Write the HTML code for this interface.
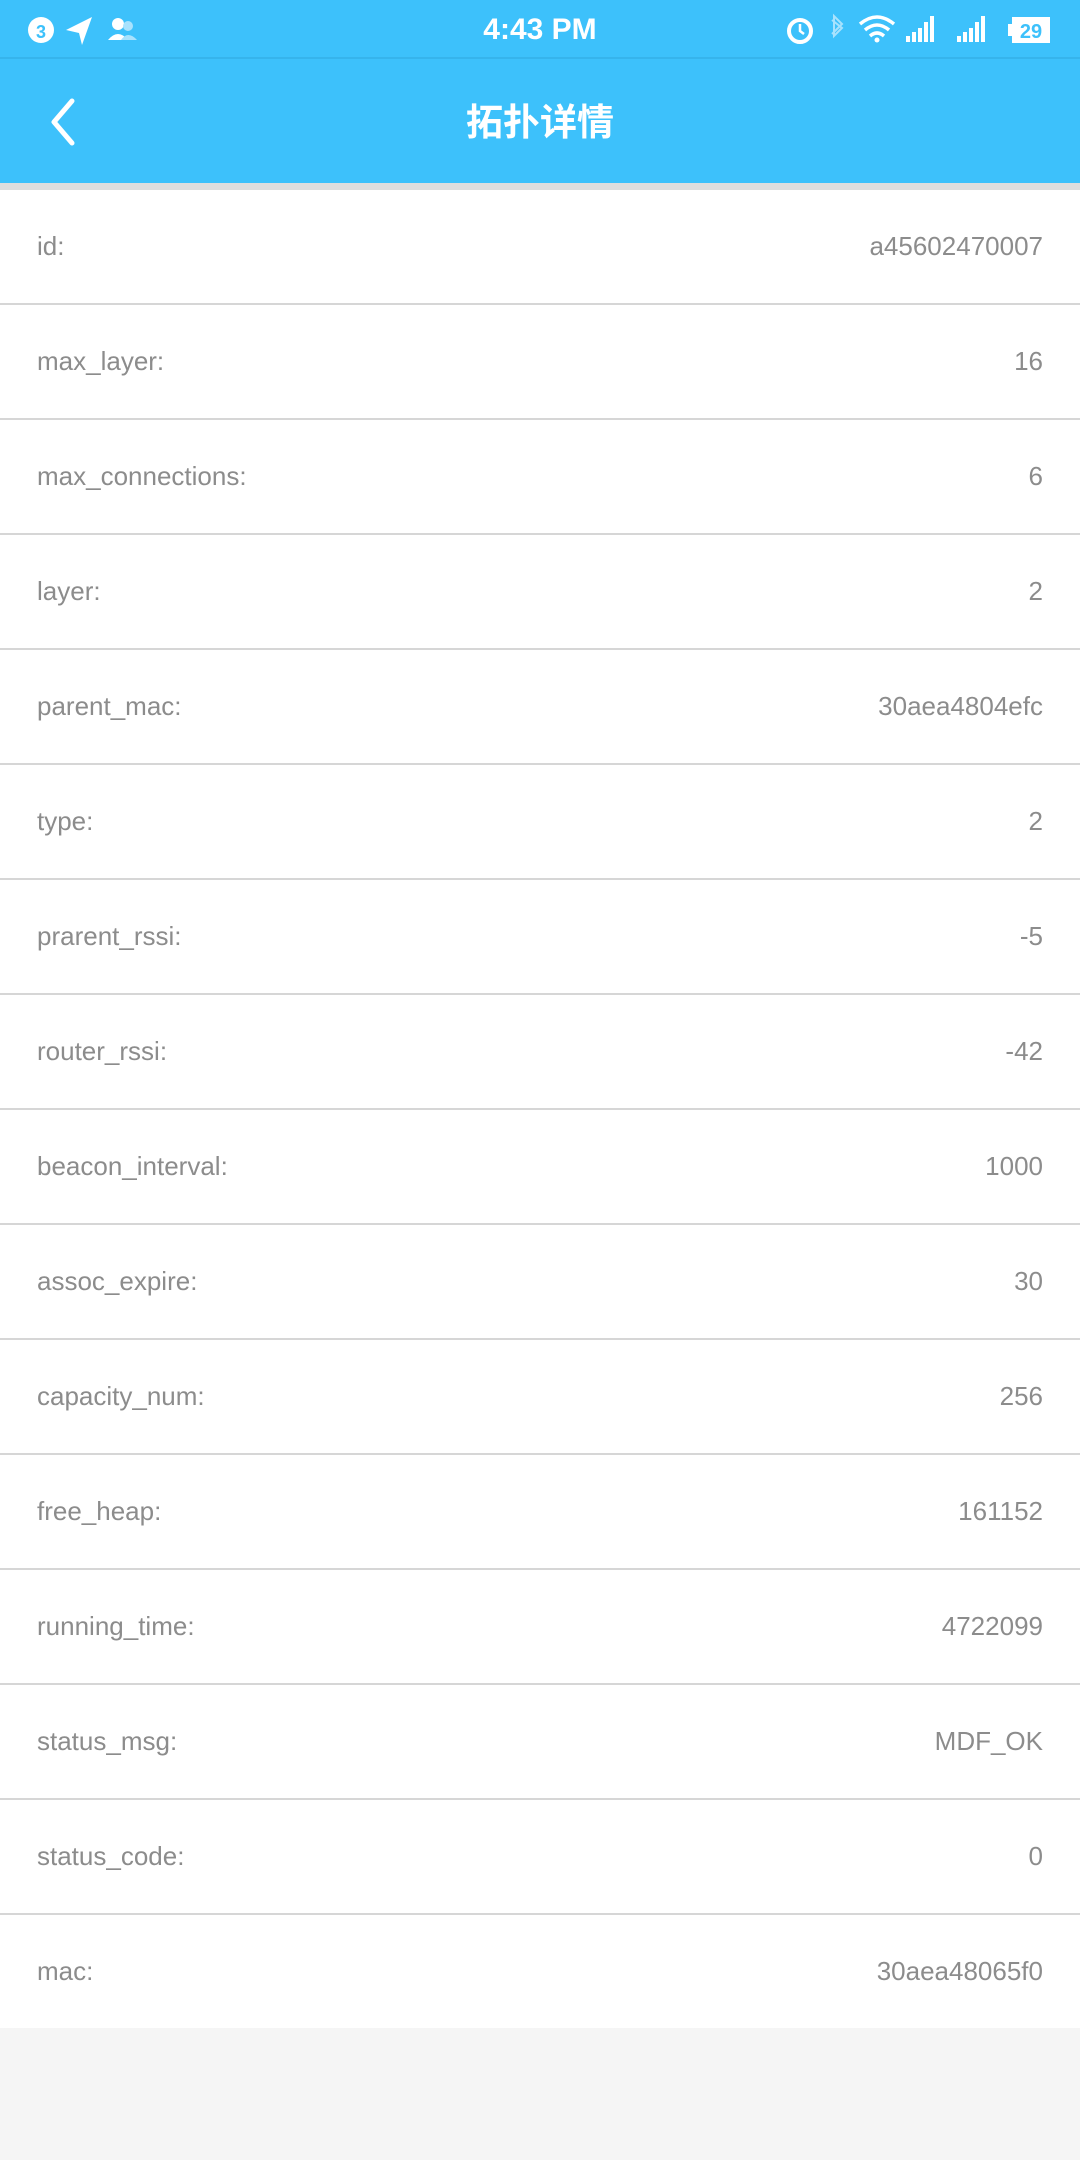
<!DOCTYPE html>
<html><head><meta charset="utf-8"><style>
*{margin:0;padding:0;box-sizing:border-box}
body{width:1080px;height:2160px;background:#f5f5f5;font-family:"Liberation Sans","Noto Sans CJK SC",sans-serif;overflow:hidden;position:relative}
.sb{position:absolute;left:0;top:0;width:1080px;height:59px;background:#3dc1fb;border-bottom:2px solid #36b4ec}
.time{position:absolute;left:0;right:0;top:13px;text-align:center;color:#fff;font-size:30px;font-weight:bold}
.hd{position:absolute;left:0;top:59px;width:1080px;height:124px;background:#3dc1fb}
.title{position:absolute;left:0;right:0;top:33px;text-align:center;color:#fff;font-size:37px;font-weight:bold;font-family:"Liberation Sans","Noto Sans CJK SC",sans-serif}
.sep{position:absolute;left:0;top:183px;width:1080px;height:7px;background:#dedede}
.list{position:absolute;left:0;top:190px;width:1080px}
.row{height:115px;background:#fff;border-bottom:2px solid #d6d6d6;display:flex;justify-content:space-between;align-items:center;padding:0 37px 0 37px;font-size:26px;color:#8c8c8c}
.row:last-child{border-bottom:none;height:113px}
</style></head><body>
<div class="sb">
<svg width="1080" height="59" style="position:absolute;left:0;top:0">
<circle cx="41" cy="30" r="13" fill="#fff"/><text x="41" y="38" text-anchor="middle" font-size="18" font-family="Liberation Sans" fill="#3dc1fb" font-weight="bold">3</text>
<path d="M66 30 L92 17 L82 45 L79 33 Z" fill="#fff"/>
<circle cx="118" cy="24" r="6" fill="#fff"/><path d="M108 40 Q118 28 128 40 Z" fill="#fff"/>
<circle cx="128" cy="26" r="5" fill="#a8e2fd"/><path d="M121 40 Q128 30 137 40 Z" fill="#a8e2fd"/>
<circle cx="800" cy="31" r="11" fill="none" stroke="#fff" stroke-width="4"/><path d="M800 24 V31 L804 34" stroke="#fff" stroke-width="2.5" fill="none"/>
<path d="M832 20 L842 28 L834 36 V16 L842 24 L832 34" stroke="#a8e2fd" stroke-width="2" fill="none"/>
<path d="M860 24 Q877 10 894 24 M865 30 Q877 20 889 30 M870 36 Q877 30 884 36" stroke="#fff" stroke-width="3.5" fill="none"/><circle cx="877" cy="40" r="2.5" fill="#fff"/>
<rect x="906" y="36" width="4" height="6" fill="#fff"/><rect x="912" y="32" width="4" height="10" fill="#fff"/><rect x="918" y="28" width="4" height="14" fill="#fff"/><rect x="924" y="22" width="4" height="20" fill="#fff"/><rect x="930" y="16" width="4" height="26" fill="#fff"/>
<rect x="957" y="36" width="4" height="6" fill="#fff"/><rect x="963" y="32" width="4" height="10" fill="#fff"/><rect x="969" y="28" width="4" height="14" fill="#fff"/><rect x="975" y="22" width="4" height="20" fill="#fff"/><rect x="981" y="16" width="4" height="26" fill="#fff"/>
<rect x="1012" y="17" width="38" height="26" fill="#fff"/><rect x="1008" y="24" width="4" height="12" fill="#fff"/>
<text x="1031" y="38" text-anchor="middle" font-size="20" font-weight="bold" font-family="Liberation Sans" fill="#3dc1fb">29</text>
</svg>
<div class="time">4:43 PM</div>
</div>
<div class="hd">
<svg width="40" height="60" style="position:absolute;left:44px;top:38px"><path d="M28 4 L10 25 L28 46" stroke="#fff" stroke-width="5" fill="none" stroke-linecap="round" stroke-linejoin="round"/></svg>
<div class="title">拓扑详情</div>
</div>
<div class="sep"></div>
<div class="list">
<div class="row"><span>id:</span><span>a45602470007</span></div>
<div class="row"><span>max_layer:</span><span>16</span></div>
<div class="row"><span>max_connections:</span><span>6</span></div>
<div class="row"><span>layer:</span><span>2</span></div>
<div class="row"><span>parent_mac:</span><span>30aea4804efc</span></div>
<div class="row"><span>type:</span><span>2</span></div>
<div class="row"><span>prarent_rssi:</span><span>-5</span></div>
<div class="row"><span>router_rssi:</span><span>-42</span></div>
<div class="row"><span>beacon_interval:</span><span>1000</span></div>
<div class="row"><span>assoc_expire:</span><span>30</span></div>
<div class="row"><span>capacity_num:</span><span>256</span></div>
<div class="row"><span>free_heap:</span><span>161152</span></div>
<div class="row"><span>running_time:</span><span>4722099</span></div>
<div class="row"><span>status_msg:</span><span>MDF_OK</span></div>
<div class="row"><span>status_code:</span><span>0</span></div>
<div class="row"><span>mac:</span><span>30aea48065f0</span></div>
</div>
</body></html>
